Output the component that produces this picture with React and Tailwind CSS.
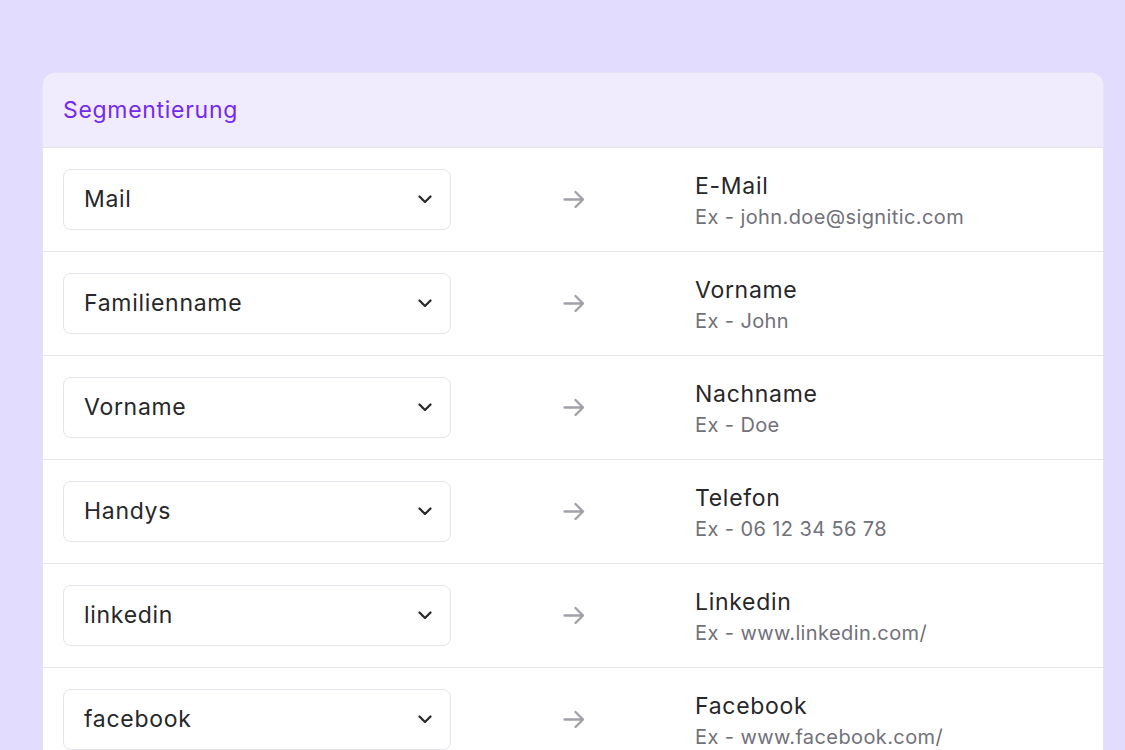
const mappings = [
  { source: "Mail", target: "E-Mail", example: "Ex - john.doe@signitic.com" },
  { source: "Familienname", target: "Vorname", example: "Ex - John" },
  { source: "Vorname", target: "Nachname", example: "Ex - Doe" },
  { source: "Handys", target: "Telefon", example: "Ex - 06 12 34 56 78" },
  { source: "linkedin", target: "Linkedin", example: "Ex - www.linkedin.com/" },
  { source: "facebook", target: "Facebook", example: "Ex - www.facebook.com/" },
];

const Chevron = () => (
  <svg width="14" height="9" viewBox="0 0 14 9" fill="none" className="text-[#27272a]">
    <path d="M1.5 1.5 L7 7 L12.5 1.5" stroke="currentColor" strokeWidth="2.2" strokeLinecap="round" strokeLinejoin="round" />
  </svg>
);

const Arrow = () => (
  <svg width="22" height="19" viewBox="0 0 22 19" fill="none" className="text-[#a1a1aa]">
    <path d="M1.5 9.5 H20 M12.5 2 L20 9.5 L12.5 17" stroke="currentColor" strokeWidth="2.4" strokeLinecap="round" strokeLinejoin="round" />
  </svg>
);

export default function App() {
  return (
    <div
      className="h-[750px] overflow-hidden bg-[#e2dcfe] pt-[72px] px-[42px]"
      style={{ fontFamily: "Inter, 'Noto Sans', sans-serif" }}
    >
      <div className="bg-white rounded-t-[14px] border border-[#e6e1f7] w-[1062px]">
        {/* Header */}
        <div className="h-[75px] bg-[#f0ecfe] rounded-t-[14px] border-b border-[#e5e3ec] flex items-center px-[20px]">
          <h2 className="text-[23px] tracking-[0.7px] text-[#7429f0]">Segmentierung</h2>
        </div>

        {/* Field mapping rows */}
        {mappings.map((row) => (
          <div
            key={row.source}
            className="h-[104px] border-b border-[#e5e5ea] flex items-center px-[20px]"
          >
            <div className="w-[388px] h-[61px] border border-[#e4e4ea] rounded-[8px] flex items-center justify-between pl-[20px] pr-[18px]">
              <span className="text-[23px] tracking-[0.7px] text-[#27272a]">{row.source}</span>
              <Chevron />
            </div>
            <div className="w-[244px] flex justify-center pl-[1px]">
              <Arrow />
            </div>
            <div className="flex flex-col mt-[4px]">
              <span className="text-[23px] tracking-[0.7px] leading-[30px] text-[#27272a]">{row.target}</span>
              <span className="text-[20px] tracking-[0.4px] leading-[30px] pt-[1px] text-[#71717a]">{row.example}</span>
            </div>
          </div>
        ))}
      </div>
    </div>
  );
}
